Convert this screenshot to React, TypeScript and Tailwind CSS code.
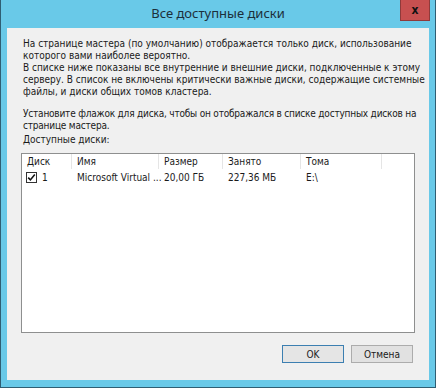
import React from "react";

const cols = [
	{ label: "Диск", w: "w-[50px]" },
	{ label: "Имя", w: "w-[87px]" },
	{ label: "Размер", w: "w-[64px]" },
	{ label: "Занято", w: "w-[78px]" },
	{ label: "Тома", w: "w-[81px]" },
];

const CheckBox = () => (
	<span className="flex h-[11px] w-[11px] items-center justify-center border border-[#333] bg-white">
		<svg width="9" height="9" viewBox="0 0 9 9">
			<path d="M1.2 4.6 L3.4 6.9 L7.8 1.6" fill="none" stroke="#111" strokeWidth="1.6" />
		</svg>
	</span>
);

export default function App() {
	return (
		<div
			className="flex h-[388px] w-[436px] flex-col border-x border-b border-[#2f5e73] bg-[#69c9e8] text-[10px] text-[#1a1a1a]"
			style={{ fontFamily: '"DejaVu Sans Condensed", "Liberation Sans", Arial, sans-serif' }}
		>
			{/* title bar */}
			<div className="relative flex h-[28px] shrink-0 items-center justify-center">
				<span
					className="text-[13px] text-[#1c2f3a]"
					style={{ fontFamily: '"Noto Sans", "Open Sans", sans-serif' }}
				>
					Все доступные диски
				</span>
				<div className="absolute right-[5px] top-0 flex h-[21px] w-[30px] items-center justify-center border border-t-0 border-[#8f3a3a] bg-[#c75050]">
					<span className="text-[12px] font-bold leading-none text-[#111]">x</span>
				</div>
			</div>

			{/* body */}
			<div className="mx-[6px] mb-[7px] flex flex-1 flex-col bg-[#f0f0f0] px-[14px] pt-[10px]">
				<div className="pl-[2px] leading-[12px] whitespace-nowrap">
					<p>
						На странице мастера (по умолчанию) отображается только диск, использование
						<br />
						которого вами наиболее вероятно.
						<br />
						В списке ниже показаны все внутренние и внешние диски, подключенные к этому
						<br />
						серверу. В список не включены критически важные диски, содержащие системные
						<br />
						файлы, и диски общих томов кластера.
					</p>
					<p className="mt-[10px] tracking-[-0.2px]">
						Установите флажок для диска, чтобы он отображался в списке доступных дисков на
						<br />
						странице мастера.
					</p>
					<p className="mt-[2px]">Доступные диски:</p>
				</div>

				{/* list view */}
				<div className="mt-[7px] h-[180px] border border-[#8e8f8f] bg-white">
					<div className="flex h-[15px] items-center">
						{cols.map((c) => (
							<div
								key={c.label}
								className={`${c.w} flex h-full items-center border-r border-[#e5e5e5] pl-[5px]`}
							>
								{c.label}
							</div>
						))}
					</div>
					<div className="flex h-[16px] items-center">
						<div className="flex w-[50px] items-center gap-[5px] pl-[4px]">
							<CheckBox />
							<span>1</span>
						</div>
						<div className="w-[87px] pl-[5px] whitespace-nowrap">Microsoft Virtual ...</div>
						<div className="w-[64px] pl-[5px]">20,00 ГБ</div>
						<div className="w-[78px] pl-[5px]">227,36 МБ</div>
						<div className="w-[81px] pl-[5px]">E:\</div>
					</div>
				</div>

				{/* buttons */}
				<div className="mt-[12px] flex justify-end gap-[7px] pr-[2px]">
					<button className="flex h-[18px] w-[62px] items-center justify-center border border-[#3c7fb1] bg-[#e5e5e5]">
						OK
					</button>
					<button className="flex h-[18px] w-[62px] items-center justify-center border border-[#acacac] bg-[#e1e1e1]">
						Отмена
					</button>
				</div>
			</div>
		</div>
	);
}
